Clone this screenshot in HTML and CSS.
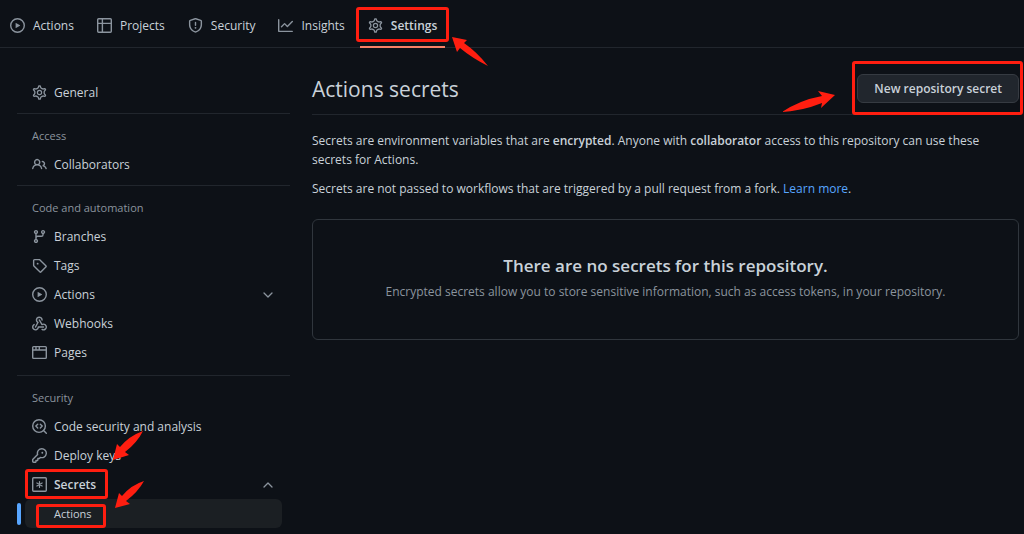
FILE: index.html
```html
<!DOCTYPE html>
<html lang="en">
<head>
<meta charset="utf-8">
<title>Actions secrets</title>
<link rel="stylesheet" href="styles.css">
</head>
<body>
<svg class="sprite" aria-hidden="true">
  <symbol id="play" viewBox="0 0 16 16"><path fill-rule="evenodd" d="M1.5 8a6.5 6.5 0 1113 0 6.5 6.5 0 01-13 0zM8 0a8 8 0 100 16A8 8 0 008 0zM6.379 5.227A.25.25 0 006 5.442v5.117a.25.25 0 00.379.214l4.264-2.559a.25.25 0 000-.428L6.379 5.227z"/></symbol>
  <symbol id="table" viewBox="0 0 16 16"><path fill="none" stroke="currentColor" stroke-width="1.5" d="M1.75.75h12.5a1 1 0 011 1v12.5a1 1 0 01-1 1H1.75a1 1 0 01-1-1V1.75a1 1 0 011-1zM5.75.75v14.500M.75 5.750h14.500"/></symbol>
  <symbol id="shield" viewBox="0 0 16 16"><path fill-rule="evenodd" d="M7.467.133a1.75 1.75 0 011.066 0l5.25 1.68A1.75 1.75 0 0115 3.48V7c0 1.566-.32 3.182-1.303 4.682-.983 1.498-2.585 2.813-5.032 3.855a1.7 1.7 0 01-1.33 0c-2.447-1.042-4.049-2.357-5.032-3.855C1.32 10.182 1 8.566 1 7V3.48a1.75 1.75 0 011.217-1.667l5.25-1.68zm.61 1.429a.25.25 0 00-.153 0l-5.25 1.68a.25.25 0 00-.174.238V7c0 1.358.275 2.666 1.057 3.86.784 1.194 2.121 2.34 4.366 3.297a.2.2 0 00.154 0c2.245-.956 3.582-2.104 4.366-3.298C13.225 9.666 13.5 8.36 13.5 7V3.48a.25.25 0 00-.174-.237l-5.25-1.68zM9 10.5a1 1 0 11-2 0 1 1 0 012 0zm-.25-5.75a.75.75 0 10-1.5 0v3a.75.75 0 001.5 0v-3z"/></symbol>
  <symbol id="graph" viewBox="0 0 16 16"><path fill-rule="evenodd" d="M1.5 1.75a.75.75 0 00-1.5 0v12.5c0 .414.336.75.75.75h14.5a.75.75 0 000-1.5H1.5V1.75zm14.28 2.53a.75.75 0 00-1.06-1.06L10 7.94 7.53 5.47a.75.75 0 00-1.06 0L3.22 8.72a.75.75 0 001.06 1.06L7 7.06l2.47 2.47a.75.75 0 001.06 0l5.25-5.25z"/></symbol>
  <symbol id="gear" viewBox="0 0 16 16"><g fill="none" stroke="currentColor" stroke-width="1.300"><path transform="translate(-.8 -.8) scale(1.1)" d="M7.429 1.525a6.593 6.593 0 011.142 0c.036.003.108.036.137.146l.289 1.105c.147.56.55.967.997 1.189.174.086.341.183.501.29.417.278.97.423 1.53.27l1.102-.303c.11-.03.175.016.195.046.219.31.41.641.573.989.014.031.022.11-.059.19l-.815.806c-.411.406-.562.957-.53 1.456a4.588 4.588 0 010 .582c-.032.499.119 1.05.53 1.456l.815.806c.08.08.073.159.059.19a6.494 6.494 0 01-.573.99c-.02.029-.086.074-.195.045l-1.103-.303c-.559-.153-1.112-.008-1.529.27-.16.107-.327.204-.5.29-.449.222-.851.628-.998 1.189l-.289 1.105c-.029.11-.101.143-.137.146a6.613 6.613 0 01-1.142 0c-.036-.003-.108-.037-.137-.146l-.289-1.105c-.147-.56-.55-.967-.997-1.189a4.502 4.502 0 01-.501-.29c-.417-.278-.97-.423-1.53-.27l-1.102.303c-.11.03-.175-.016-.195-.046a6.492 6.492 0 01-.573-.989c-.014-.031-.022-.11.059-.19l.815-.806c.411-.406.562-.957.53-1.456a4.587 4.587 0 010-.582c.032-.499-.119-1.05-.53-1.456l-.815-.806c-.08-.08-.073-.159-.059-.19a6.44 6.44 0 01.573-.99c.02-.029.086-.075.195-.045l1.103.303c.559.153 1.112.008 1.529-.27.16-.107.327-.204.5-.29.449-.222.851-.628.998-1.189l.289-1.105c.029-.11.101-.143.137-.146z"/><circle cx="8" cy="8" r="2.250"/></g></symbol>
  <symbol id="people" viewBox="0 0 16 16"><path fill-rule="evenodd" d="M5.5 3.5a2 2 0 100 4 2 2 0 000-4zM2 5.5a3.5 3.5 0 115.898 2.549 5.507 5.507 0 013.034 4.084.75.75 0 11-1.482.235 4.001 4.001 0 00-7.9 0 .75.75 0 01-1.482-.236A5.507 5.507 0 013.102 8.05 3.49 3.49 0 012 5.5zM11 4a.75.75 0 100 1.5 1.5 1.5 0 01.666 2.844.75.75 0 00-.416.672v.352a.75.75 0 00.574.73c1.2.289 2.162 1.2 2.522 2.372a.75.75 0 101.434-.44 5.01 5.01 0 00-2.56-3.012A3 3 0 0011 4z"/></symbol>
  <symbol id="branch" viewBox="0 0 16 16"><path fill-rule="evenodd" d="M11.75 2.5a.75.75 0 100 1.5.75.75 0 000-1.5zm-2.25.75a2.25 2.25 0 113 2.122V6A2.5 2.5 0 0110 8.5H6a1 1 0 00-1 1v1.128a2.251 2.251 0 11-1.500 0V5.372a2.25 2.25 0 111.5 0v1.836A2.492 2.492 0 016 7h4a1 1 0 001-1v-.628A2.25 2.25 0 019.5 3.25zM4.25 12a.75.75 0 100 1.5.75.75 0 000-1.5zM3.5 3.25a.75.75 0 111.5 0 .75.75 0 01-1.5 0z"/></symbol>
  <symbol id="tag" viewBox="0 0 16 16"><path fill-rule="evenodd" d="M2.5 7.775V2.75a.25.25 0 01.25-.25h5.025a.25.25 0 01.177.073l6.25 6.25a.25.25 0 010 .354l-5.025 5.025a.25.25 0 01-.354 0l-6.25-6.25a.25.25 0 01-.073-.177zm-1.5 0V2.75C1 1.784 1.784 1 2.75 1h5.025c.464 0 .91.184 1.238.513l6.25 6.25a1.75 1.75 0 010 2.474l-5.026 5.026a1.75 1.75 0 01-2.474 0l-6.25-6.25A1.75 1.75 0 011 7.775zM6 5a1 1 0 100 2 1 1 0 000-2z"/></symbol>
  <symbol id="webhook" viewBox="0 0 16 16"><path d="M5.5 4.25a2.25 2.25 0 014.5 0 .75.75 0 001.5 0 3.75 3.75 0 10-6.14 2.889l-2.272 4.258a.75.75 0 001.324.706L7 7.25a.75.75 0 00-.309-1.015A2.25 2.25 0 015.5 4.25z"/><path d="M7.364 3.607a.75.75 0 011.03.257l2.608 4.349a3.75 3.75 0 11-.628 6.785.75.75 0 01.752-1.299 2.25 2.25 0 10-.033-3.88.75.75 0 01-1.03-.256L7.107 4.636a.75.75 0 01.257-1.03z"/><path d="M2.9 8.776A.75.75 0 012.625 9.8 2.25 2.25 0 106 11.75a.75.75 0 01.75-.751h5.5a.75.75 0 010 1.5H7.425a3.751 3.751 0 11-5.55-3.998.75.75 0 011.024.274z"/></symbol>
  <symbol id="browser" viewBox="0 0 16 16"><path fill="none" stroke="currentColor" stroke-width="1.500" d="M1.750 1.750h12.500a1 1 0 011 1v10.500a1 1 0 01-1 1H1.750a1 1 0 01-1-1V2.750a1 1 0 011-1zM.75 5.250h14.500M4.250 2v3M7.750 2v3"/></symbol>
  <symbol id="codescan" viewBox="0 0 16 16"><g fill="none" stroke="currentColor" stroke-width="1.500" stroke-linecap="round" stroke-linejoin="round"><circle cx="7.500" cy="7.500" r="6.750"/><path d="M12.300 12.300l2.950 2.950M6.100 5.500l-2 2 2 2M8.900 5.500l2 2-2 2"/></g></symbol>
  <symbol id="key" viewBox="0 0 16 16"><path fill-rule="evenodd" d="M6.5 5.5a4 4 0 112.731 3.795.75.75 0 00-.768.18L7.44 10.5H6.25a.75.75 0 00-.75.75v1.19l-.06.06H4.25a.75.75 0 00-.75.75v1.19l-.06.06H1.75a.25.25 0 01-.25-.25v-1.69l5.024-5.023a.75.75 0 00.181-.768A3.995 3.995 0 016.5 5.5zm4-5.5a5.5 5.5 0 00-5.348 6.788L.22 11.72a.75.75 0 00-.22.53v2C0 15.216.784 16 1.75 16h2a.75.75 0 00.53-.22l.5-.5a.75.75 0 00.22-.53V14h.75a.75.75 0 00.53-.22l.5-.5a.75.75 0 00.22-.53V12h.75a.75.75 0 00.53-.22l.932-.932A5.5 5.5 0 1010.5 0zm.5 6a1 1 0 100-2 1 1 0 000 2z"/></symbol>
  <symbol id="asterisk" viewBox="0 0 16 16"><g fill="none" stroke="currentColor" stroke-width="1.500"><rect x=".75" y=".75" width="14.500" height="14.500" rx="1"/><path stroke-linecap="round" stroke-width="1.300" d="M8 4.800v6.400M5.200 6.400l5.600 3.200M10.800 6.400L5.200 9.600"/></g></symbol>
  <symbol id="down" viewBox="0 0 12 12"><path fill="none" stroke="currentColor" stroke-width="1.300" stroke-linecap="round" stroke-linejoin="round" d="M2 4l4 4 4-4"/></symbol>
  <symbol id="up" viewBox="0 0 12 12"><path fill="none" stroke="currentColor" stroke-width="1.300" stroke-linecap="round" stroke-linejoin="round" d="M2 8l4-4 4 4"/></symbol>
</svg>

<nav class="tabs" aria-label="Repository">
  <a class="tab" href="#"><svg class="icon"><use href="#play"/></svg>Actions</a>
  <a class="tab" href="#"><svg class="icon"><use href="#table"/></svg>Projects</a>
  <a class="tab" href="#"><svg class="icon"><use href="#shield"/></svg>Security</a>
  <a class="tab" href="#"><svg class="icon"><use href="#graph"/></svg>Insights</a>
  <a class="tab tab-current" href="#" aria-current="page"><svg class="icon"><use href="#gear"/></svg>Settings
    <span class="frame frame-tab"></span>
    <svg class="arrow arrow-tab" viewBox="0 0 36 30"><path d="M0 0L15 3L12 6Q25 15 36 29Q20 21 8 11L5 15Z"/></svg>
  </a>
</nav>

<div class="layout">
  <nav class="sidebar" aria-label="Settings">
    <div class="general"><a class="item" href="#"><svg class="icon"><use href="#gear"/></svg>General</a></div>
    <section class="group">
      <h2 class="group-title">Access</h2>
      <a class="item" href="#"><svg class="icon"><use href="#people"/></svg>Collaborators</a>
    </section>
    <section class="group">
      <h2 class="group-title">Code and automation</h2>
      <a class="item" href="#"><svg class="icon"><use href="#branch"/></svg>Branches</a>
      <a class="item" href="#"><svg class="icon"><use href="#tag"/></svg>Tags</a>
      <button class="item" type="button" aria-expanded="false"><svg class="icon"><use href="#play"/></svg>Actions<svg class="chevron"><use href="#down"/></svg></button>
      <a class="item" href="#"><svg class="icon"><use href="#webhook"/></svg>Webhooks</a>
      <a class="item" href="#"><svg class="icon"><use href="#browser"/></svg>Pages</a>
    </section>
    <section class="group">
      <h2 class="group-title">Security</h2>
      <a class="item" href="#"><svg class="icon"><use href="#codescan"/></svg>Code security and analysis</a>
      <a class="item" href="#"><svg class="icon"><use href="#key"/></svg>Deploy keys
        <svg class="arrow arrow-keys" viewBox="0 0 30 30"><path d="M0 29L4 13L7 16Q16 5 30 0Q24 12 12 21L16 24Z"/></svg>
      </a>
      <button class="item item-open" type="button" aria-expanded="true"><svg class="icon"><use href="#asterisk"/></svg>Secrets<svg class="chevron"><use href="#up"/></svg>
        <span class="frame frame-secrets"></span>
      </button>
      <a class="subitem" href="#" aria-current="page">Actions
        <span class="frame frame-actions"></span>
        <svg class="arrow arrow-actions" viewBox="0 0 30 28"><path d="M0 27L4 12L7 15Q16 4 29 0Q23 11 11 20L15 23Z"/></svg>
      </a>
    </section>
  </nav>

  <main class="content">
    <header class="head">
      <h1 class="title">Actions secrets</h1>
      <div class="action">
        <button class="button" type="button">New repository secret</button>
        <span class="frame frame-button"></span>
        <svg class="arrow arrow-button" viewBox="0 0 53 22"><path d="M53 4L36 0L40 5Q18 9 0 21Q20 20 40 12L39 17Z"/></svg>
      </div>
    </header>
    <p class="text">Secrets are environment variables that are <strong>encrypted</strong>. Anyone with <strong>collaborator</strong> access to this repository can use these secrets for Actions.</p>
    <p class="text">Secrets are not passed to workflows that are triggered by a pull request from a fork. <a class="link" href="#">Learn more</a>.</p>
    <section class="blank">
      <h2 class="blank-title">There are no secrets for this repository.</h2>
      <p class="blank-text">Encrypted secrets allow you to store sensitive information, such as access tokens, in your repository.</p>
    </section>
  </main>
</div>
</body>
</html>
```
FILE: styles.css
```css
* { box-sizing: border-box; }

body {
  margin: 0;
  background: #0d1117;
  color: #c9d1d9;
  font: 12px/19px "Open Sans", "Noto Sans", sans-serif;
}

h1, h2, p { margin: 0; }
a { color: inherit; text-decoration: none; }
strong { font-weight: 600; }

.sprite { position: absolute; width: 0; height: 0; }

.icon {
  flex: none;
  width: 15px;
  height: 15px;
  color: #8b949e;
  fill: currentColor;
}

.tabs {
  display: flex;
  gap: 7px;
  height: 48px;
  padding: 0 2px;
  border-bottom: 1px solid #21262d;
}

.tab {
  position: relative;
  display: flex;
  align-items: center;
  gap: 8px;
  height: 48px;
  padding: 5px 8px 0;
  border-bottom: 2px solid transparent;
}

.tab-current {
  border-bottom-color: #f78166;
  font-weight: 600;
}

.layout {
  display: grid;
  grid-template-columns: 273px minmax(0, 1fr);
  gap: 22px;
  padding: 0 5px 0 17px;
}

.sidebar { padding-top: 29px; }
.general { padding-bottom: 7px; }

.group {
  padding: 13px 0 7px;
  border-top: 1px solid #21262d;
}

.group:last-child { margin-top: 2px; }

.group-title {
  margin-bottom: 4px;
  padding-left: 15px;
  color: #8b949e;
  font-size: 11px;
  font-weight: 400;
  line-height: 18px;
}

.item {
  position: relative;
  display: flex;
  align-items: center;
  gap: 7px;
  width: 100%;
  height: 29px;
  padding: 2px 16px 0 15px;
  border: 0;
  background: none;
  color: inherit;
  font: inherit;
  text-align: left;
}

.item-open { font-weight: 600; }

.chevron {
  width: 12px;
  height: 12px;
  margin-left: auto;
  color: #8b949e;
}

.subitem {
  position: relative;
  display: flex;
  align-items: center;
  height: 29px;
  margin: 1px 8px 0;
  padding-left: 29px;
  border-radius: 6px;
  background: #1b1f23;
  font-size: 11px;
}

.subitem::before {
  content: "";
  position: absolute;
  top: 4px;
  bottom: 3px;
  left: -8px;
  width: 4px;
  border-radius: 3px;
  background: #58a6ff;
}

.content { padding-top: 26px; }

.head {
  display: flex;
  align-items: center;
  justify-content: space-between;
  margin-bottom: 16px;
  padding-bottom: 11px;
  border-bottom: 1px solid #21262d;
}

.title {
  font-size: 21px;
  font-weight: 400;
  line-height: 28px;
}

.action { position: relative; }

.button {
  display: block;
  height: 29px;
  padding: 0 16px;
  border: 1px solid #363b42;
  border-radius: 6px;
  background: #21262d;
  color: #c9d1d9;
  font: inherit;
  font-weight: 600;
}

.text { margin-bottom: 10px; }
.link { color: #58a6ff; }

.blank {
  margin-top: 21px;
  padding: 32px 16px 38px;
  border: 1px solid #30363d;
  border-radius: 6px;
  text-align: center;
}

.blank-title {
  font-size: 17px;
  font-weight: 600;
  line-height: 27px;
}

.blank-text {
  margin-top: 3px;
  color: #8b949e;
}

/* Red marks drawn over the controls */
.frame {
  position: absolute;
  border: 3px solid #ff1e10;
  border-radius: 3px;
  pointer-events: none;
}

.frame-tab { inset: 7px -4px 4px; }
.frame-secrets { top: 0; left: 8px; width: 83px; height: 30px; }
.frame-actions { top: 5px; left: 11px; width: 70px; height: 24px; }
.frame-button { inset: -13px -4px -12px -5px; }

.arrow {
  position: absolute;
  z-index: 1;
  fill: #ff1e10;
  pointer-events: none;
}

.arrow-tab { top: 37px; left: calc(100% + 7px); width: 36px; height: 30px; }
.arrow-keys { top: -9px; left: 96px; width: 30px; height: 30px; }
.arrow-actions { top: -18px; left: 90px; width: 30px; height: 28px; }
.arrow-button { top: 17px; right: calc(100% + 22px); width: 53px; height: 22px; }
```
